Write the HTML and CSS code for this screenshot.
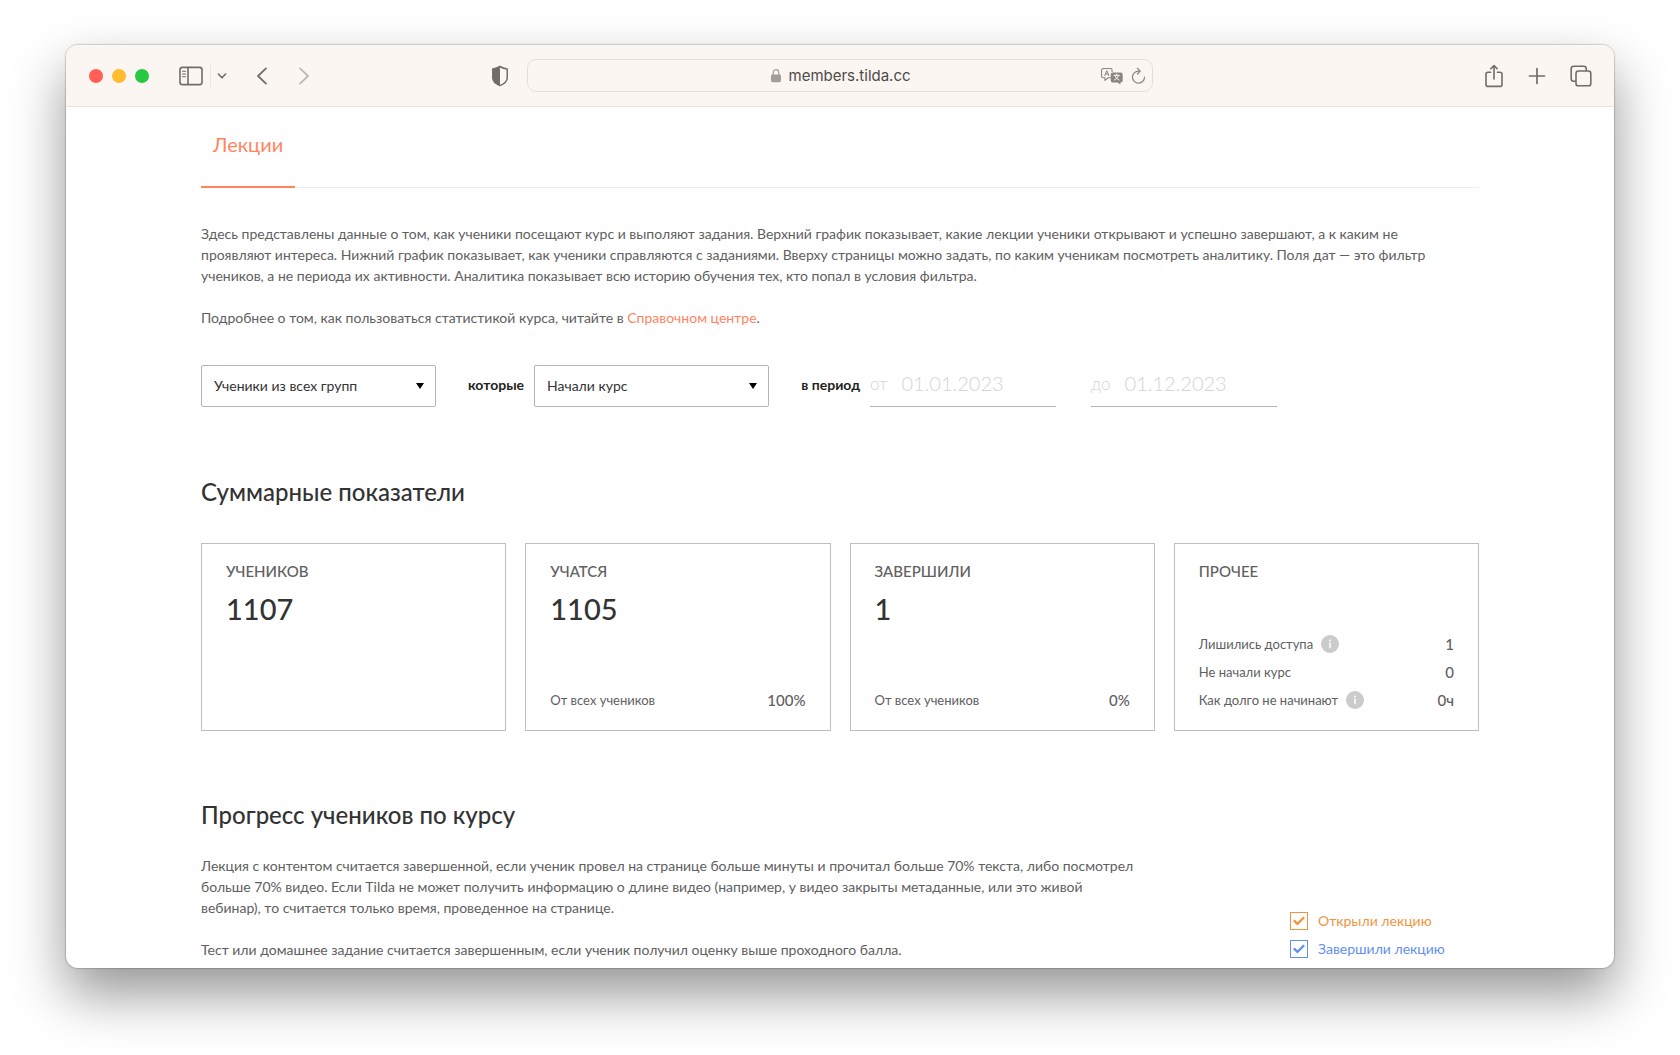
FILE: index.html
```html
<!DOCTYPE html>
<html lang="ru">
<head>
<meta charset="utf-8">
<meta name="viewport" content="width=device-width, initial-scale=1">
<title>Лекции</title>
<link rel="stylesheet" href="styles.css">
</head>
<body>
<div class="window">
  <header class="toolbar">
    <div class="toolbar-left">
      <div class="lights">
        <button class="light light-close" type="button" aria-label="Закрыть"></button>
        <button class="light light-min" type="button" aria-label="Свернуть"></button>
        <button class="light light-zoom" type="button" aria-label="Развернуть"></button>
      </div>
      <button class="icon-btn sidebar-btn" type="button" aria-label="Боковое меню">
        <svg width="24" height="20" viewBox="0 0 24 20" fill="none" stroke="currentColor" stroke-width="1.6"><rect x="1" y="1.4" width="22" height="17.2" rx="2.4"/><path d="M9 1.4v17.2"/><path d="M3.4 5.2h3.2M3.4 8h3.2M3.4 10.8h3.2" stroke-width="1.1" stroke-linecap="round"/></svg>
      </button>
      <span class="divider"></span>
      <button class="icon-btn" type="button" aria-label="Группы вкладок">
        <svg width="10" height="8" viewBox="0 0 10 8" fill="none" stroke="currentColor" stroke-width="1.6" stroke-linecap="round" stroke-linejoin="round"><path d="M1.4 2 5 5.8 8.6 2"/></svg>
      </button>
      <button class="icon-btn back-btn" type="button" aria-label="Назад">
        <svg width="12" height="18" viewBox="0 0 12 18" fill="none" stroke="currentColor" stroke-width="1.8" stroke-linecap="round" stroke-linejoin="round"><path d="M10 1.4 2 9l8 7.6"/></svg>
      </button>
      <button class="icon-btn forward-btn" type="button" aria-label="Вперёд" disabled>
        <svg width="12" height="18" viewBox="0 0 12 18" fill="none" stroke="currentColor" stroke-width="1.8" stroke-linecap="round" stroke-linejoin="round"><path d="M2 1.4 10 9l-8 7.6"/></svg>
      </button>
      <button class="icon-btn shield-btn" type="button" aria-label="Конфиденциальность">
        <svg width="18" height="22" viewBox="0 0 18 22"><path d="M9 1.500c2.300 1.500 4.700 2.200 7.200 2.500v9c0 3.500-3 5.800-7.200 7.600-4.200-1.800-7.200-4.100-7.200-7.600V4C4.300 3.700 6.700 3 9 1.500z" fill="none" stroke="currentColor" stroke-width="1.500" stroke-linejoin="round"/><path d="M9 1.500v19.100c-4.200-1.800-7.200-4.100-7.200-7.600V4C4.300 3.700 6.700 3 9 1.500z" fill="currentColor"/></svg>
      </button>
    </div>
    <div class="address">
      <span class="address-site">
        <svg class="muted" width="12" height="15" viewBox="0 0 12 15"><path d="M3.200 7V4.400a2.800 2.800 0 0 1 5.600 0V7" fill="none" stroke="currentColor" stroke-width="1.200"/><rect x="1" y="6.600" width="10" height="7.600" rx="1.400" fill="currentColor"/></svg>
        <input class="address-input" type="text" value="members.tilda.cc" aria-label="Адрес сайта">
      </span>
      <span class="address-tools">
        <button class="icon-btn" type="button" aria-label="Перевести">
          <svg width="24" height="18" viewBox="0 0 24 18" fill="none" stroke="currentColor" stroke-linejoin="round" stroke-linecap="round"><path d="M11.500 10.800H8.300L5 13.400v-2.600H3.400A1.900 1.900 0 0 1 1.500 8.900V3.400a1.900 1.900 0 0 1 1.900-1.900h6.800a1.900 1.900 0 0 1 1.900 1.900v1.100" stroke-width="1.100"/><path d="m4.800 8.600 2-5 2 5M5.500 7h2.600" stroke-width="1"/><path d="M12.700 5.400h8a2 2 0 0 1 2 2v6a2 2 0 0 1-2 2h-.3v2.200l-2.800-2.200h-4.900a2 2 0 0 1-2-2v-6a2 2 0 0 1 2-2z" fill="currentColor" stroke="none"/><path d="M14 8.300h5.400M16.700 7.100v1.200M15 8.600c.5 2 2 3.600 4 4.400M18.400 8.600c-.5 2-2 3.600-4 4.400" stroke="#fbf6f2" stroke-width="1"/></svg>
        </button>
        <button class="icon-btn" type="button" aria-label="Обновить">
          <svg width="15" height="17" viewBox="0 0 15 17" fill="none" stroke="currentColor" stroke-width="1.200" stroke-linecap="round" stroke-linejoin="round"><path d="M8.600 4.100H7.500A6 6 0 1 0 13.500 10"/><path d="m6.400 1.300 2.900 2.800-2.900 2.900"/></svg>
        </button>
      </span>
    </div>
    <div class="toolbar-right">
      <button class="icon-btn" type="button" aria-label="Поделиться">
        <svg width="20" height="24" viewBox="0 0 20 24" fill="none" stroke="currentColor" stroke-width="1.600" stroke-linecap="round" stroke-linejoin="round"><path d="M6.600 8.200H4a2 2 0 0 0-2 2v10.200a2 2 0 0 0 2 2h12a2 2 0 0 0 2-2V10.200a2 2 0 0 0-2-2h-2.600"/><path d="M10 15V1.800M6.800 4.800 10 1.600l3.200 3.200"/></svg>
      </button>
      <button class="icon-btn" type="button" aria-label="Новая вкладка">
        <svg width="18" height="18" viewBox="0 0 18 18" fill="none" stroke="currentColor" stroke-width="1.700" stroke-linecap="round"><path d="M9 1.500v15M1.500 9h15"/></svg>
      </button>
      <button class="icon-btn" type="button" aria-label="Обзор вкладок">
        <svg width="22" height="22" viewBox="0 0 22 22" fill="none" stroke="currentColor" stroke-width="1.600" stroke-linejoin="round"><path d="M6 16.200H3.600a2.400 2.400 0 0 1-2.400-2.400V3.600a2.400 2.400 0 0 1 2.400-2.400h10.200a2.400 2.400 0 0 1 2.400 2.400V6"/><rect x="6" y="6" width="14.800" height="14.800" rx="2.400"/></svg>
      </button>
    </div>
  </header>

  <main class="page">
    <nav class="tabs">
      <a class="tab" href="#lectures" aria-current="page">Лекции</a>
    </nav>

    <div class="prose">
      <p>Здесь представлены данные о том, как ученики посещают курс и выполяют задания. Верхний график показывает, какие лекции ученики открывают и успешно завершают, а к каким не<br> проявляют интереса. Нижний график показывает, как ученики справляются с заданиями. Вверху страницы можно задать, по каким ученикам посмотреть аналитику. Поля дат — это фильтр<br> учеников, а не периода их активности. Аналитика показывает всю историю обучения тех, кто попал в условия фильтра.</p>
      <p>Подробнее о том, как пользоваться статистикой курса, читайте в <a href="#help">Справочном центре</a>.</p>
    </div>

    <form class="filters">
      <span class="select">
        <select aria-label="Группа учеников"><option>Ученики из всех групп</option></select>
      </span>
      <label class="filter-label" for="action">которые</label>
      <span class="select">
        <select id="action"><option>Начали курс</option></select>
      </span>
      <span class="filter-label filter-period">в период</span>
      <label class="date">от <input type="text" placeholder="01.01.2023"></label>
      <label class="date">до <input type="text" placeholder="01.12.2023"></label>
    </form>

    <h2 class="title">Суммарные показатели</h2>
    <section class="cards">
      <article class="card">
        <h3 class="card-label">Учеников</h3>
        <p class="card-value">1107</p>
      </article>
      <article class="card">
        <h3 class="card-label">Учатся</h3>
        <p class="card-value">1105</p>
        <dl class="stats"><div class="stat"><dt>От всех учеников</dt><dd>100%</dd></div></dl>
      </article>
      <article class="card">
        <h3 class="card-label">Завершили</h3>
        <p class="card-value">1</p>
        <dl class="stats"><div class="stat"><dt>От всех учеников</dt><dd>0%</dd></div></dl>
      </article>
      <article class="card">
        <h3 class="card-label">Прочее</h3>
        <dl class="stats">
          <div class="stat"><dt>Лишились доступа <button class="info" type="button" aria-label="Подсказка"><svg width="18" height="18" viewBox="0 0 18 18"><circle cx="9" cy="9" r="9" fill="#cbcbcb"/><circle cx="9" cy="5.400" r="1" fill="#fff"/><path d="M9 7.600v5.600" stroke="#fff" stroke-width="1.500"/></svg></button></dt><dd>1</dd></div>
          <div class="stat"><dt>Не начали курс</dt><dd>0</dd></div>
          <div class="stat"><dt>Как долго не начинают <button class="info" type="button" aria-label="Подсказка"><svg width="18" height="18" viewBox="0 0 18 18"><circle cx="9" cy="9" r="9" fill="#cbcbcb"/><circle cx="9" cy="5.400" r="1" fill="#fff"/><path d="M9 7.600v5.600" stroke="#fff" stroke-width="1.500"/></svg></button></dt><dd>0ч</dd></div>
        </dl>
      </article>
    </section>

    <h2 class="title">Прогресс учеников по курсу</h2>
    <section class="progress">
      <div class="prose">
        <p>Лекция с контентом считается завершенной, если ученик провел на странице больше минуты и прочитал больше 70% текста, либо посмотрел<br> больше 70% видео. Если Tilda не может получить информацию о длине видео (например, у видео закрыты метаданные, или это живой<br> вебинар), то считается только время, проведенное на странице.</p>
        <p>Тест или домашнее задание считается завершенным, если ученик получил оценку выше проходного балла.</p>
      </div>
      <div class="legend">
        <label class="legend-item legend-opened"><input type="checkbox" checked>Открыли лекцию</label>
        <label class="legend-item legend-done"><input type="checkbox" checked>Завершили лекцию</label>
      </div>
    </section>
  </main>
</div>
</body>
</html>
```

FILE: styles.css
```css
* {
  box-sizing: border-box;
}

body {
  margin: 0;
  height: 100vh;
  padding: 45px 66px 87px;
  display: flex;
  background: #fff;
  color: #606060;
  font: 14px/21px Lato, "Open Sans", sans-serif;
}

button,
input,
select {
  margin: 0;
  padding: 0;
  border: 0;
  background: none;
  color: inherit;
  font: inherit;
}

h2,
h3,
p,
dl,
dd {
  margin: 0;
}

svg {
  display: block;
}

/* Browser window */
.window {
  flex: 1;
  display: flex;
  flex-direction: column;
  overflow: hidden;
  border-radius: 12px;
  background: #fff;
  box-shadow: 0 0 1px 1px rgba(0, 0, 0, 0.16), 0 26px 54px rgba(0, 0, 0, 0.42);
}

.toolbar {
  flex: none;
  height: 62px;
  display: grid;
  grid-template-columns: 1fr 626px 1fr;
  align-items: center;
  background: #fbf6f2;
  border-bottom: 1px solid #e9e5e2;
  color: #736d68;
}

.toolbar-left,
.toolbar-right,
.lights,
.address,
.address-site,
.address-tools {
  display: flex;
  align-items: center;
}

.toolbar-left {
  padding: 0 18px 0 23px;
}

.toolbar-right {
  justify-content: flex-end;
  gap: 24px;
  padding-right: 22px;
}

.lights {
  gap: 9px;
  margin-right: 30px;
}

.light {
  width: 14px;
  height: 14px;
  border-radius: 50%;
}

.light-close { background: #ff5f57; }
.light-min { background: #febc2e; }
.light-zoom { background: #28c840; }

.divider {
  width: 1px;
  height: 22px;
  margin: 0 6px 0 7px;
  background: #ece7e3;
}

.back-btn { margin-left: 29px; }

.forward-btn {
  margin-left: 30px;
  color: #bdb8b4;
}

.shield-btn { margin-left: auto; }

.address {
  height: 33px;
  position: relative;
  justify-content: center;
  border: 1px solid #e4dfdb;
  border-radius: 9px;
}

.address-site { gap: 7px; }

.muted { color: #a39e9a; }

.address-input {
  width: 122px;
  color: #4d4a48;
  font: 15px/21px Inter, "Liberation Sans", sans-serif;
}

.address-tools {
  position: absolute;
  right: 6px;
  gap: 7px;
  color: #8a8581;
}

/* Page */
.page {
  flex: 1;
  min-height: 0;
  padding: 0 135px;
}

.tabs {
  height: 81px;
  display: flex;
  margin-bottom: 35px;
  border-bottom: 1px solid #ececec;
}

.tab {
  height: 81px;
  padding: 23px 12px 0;
  border-bottom: 2px solid #ff8562;
  color: #ff8562;
  font-size: 20px;
  line-height: 28px;
  text-decoration: none;
}

.prose p + p { margin-top: 21px; }

.prose a {
  color: #ff8562;
  text-decoration: none;
}

.filters {
  display: flex;
  align-items: center;
  margin: 37px 0 67px;
}

.select {
  position: relative;
  width: 235px;
}

.select select {
  width: 100%;
  height: 42px;
  padding: 0 30px 2px 12px;
  appearance: none;
  border: 1px solid #b5b5b5;
  border-radius: 2px;
  color: #333;
}

.select::after {
  content: "";
  position: absolute;
  right: 12px;
  top: 18px;
  width: 8px;
  height: 6px;
  background: #000;
  clip-path: polygon(0 0, 100% 0, 50% 100%);
  pointer-events: none;
}

.filter-label {
  width: 98px;
  padding: 0 10px 4px 0;
  color: #222;
  font-size: 14px;
  font-weight: 700;
  text-align: right;
}

.filter-period { width: 101px; }

.date {
  width: 186px;
  height: 42px;
  display: flex;
  align-items: center;
  gap: 14px;
  margin-right: 35px;
  padding-bottom: 4px;
  border-bottom: 1px solid #b5b5b5;
  color: #d4d4d4;
  font-size: 17px;
  font-weight: 300;
}

.date input {
  min-width: 0;
  flex: 1;
  font-size: 20px;
}

.date input::placeholder { color: #d4d4d4; }

.title {
  color: #333;
  font-size: 24px;
  line-height: 36px;
  font-weight: 500;
}

.cards {
  display: grid;
  grid-template-columns: repeat(4, 1fr);
  gap: 19px;
  margin: 33px 0 66px;
}

.card {
  min-height: 188px;
  display: flex;
  flex-direction: column;
  padding: 17px 24px 16px;
  border: 1px solid #bfbfbf;
}

.card-label {
  font-size: 15px;
  line-height: 21px;
  font-weight: 500;
  text-transform: uppercase;
}

.card-value {
  margin-top: 9px;
  color: #333;
  font-size: 29px;
  line-height: 36px;
  font-weight: 500;
}

.stats { margin-top: auto; }

.stat {
  display: flex;
  justify-content: space-between;
  line-height: 28px;
  font-size: 13px;
}

.stat dt {
  display: flex;
  align-items: center;
  gap: 8px;
}

.stat dd { font-size: 15px; font-weight: 500; }

.progress {
  display: flex;
  justify-content: space-between;
  align-items: flex-end;
  margin-top: 22px;
}

.progress .prose { width: 959px; }

.legend {
  width: 189px;
  margin-bottom: -3px;
  line-height: 28px;
}

.legend-item {
  display: flex;
  align-items: center;
  gap: 10px;
}

.legend-opened { color: #f0953f; }
.legend-done { color: #648ff0; }

.legend-item input {
  width: 18px;
  height: 18px;
  display: grid;
  place-items: center;
  appearance: none;
  border: 1px solid currentColor;
}

.legend-item input:checked::before {
  content: "";
  width: 12px;
  height: 10px;
  background: currentColor;
  clip-path: polygon(0 52%, 14% 36%, 37% 62%, 86% 4%, 100% 20%, 37% 96%);
}
```
